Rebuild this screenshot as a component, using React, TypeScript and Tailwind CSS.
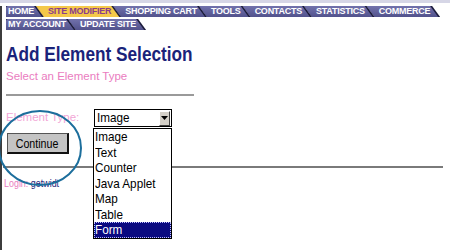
const tabsTop = ['HOME', 'SITE MODIFIER', 'SHOPPING CART', 'TOOLS', 'CONTACTS', 'STATISTICS', 'COMMERCE']
const tabsBottom = ['MY ACCOUNT', 'UPDATE SITE']
const options = ['Image', 'Text', 'Counter', 'Java Applet', 'Map', 'Table', 'Form']

function Tab({ label, first, active }: { label: string; first?: boolean; active?: boolean }) {
  return (
    <div
      className={
        first
          ? 'h-[11px] bg-[#1c1c3c] [clip-path:polygon(0_0,calc(100%_-_8px)_0,100%_100%,0_100%)]'
          : '-ml-[8px] h-[11px] bg-[#1c1c3c] [clip-path:polygon(0_0,calc(100%_-_8px)_0,100%_100%,8px_100%)]'
      }
    >
      <div
        className={`h-[11px] leading-[11px] text-[9px] tracking-[-0.25px] font-bold whitespace-nowrap ${
          first ? 'pl-[2px] rounded-tl-[2px]' : 'pl-[12px]'
        } pr-[10px] ${
          active ? 'bg-[#f4c84a] text-[#8a3d8a]' : 'bg-gradient-to-b from-[#7272ac] to-[#52528c] text-white'
        } [clip-path:polygon(0_0,calc(100%_-_10px)_0,calc(100%_-_2px)_100%,0_100%)]`}
      >
        {label}
      </div>
    </div>
  )
}

export default function App() {
  return (
    <div className="relative w-[450px] h-[250px] overflow-hidden bg-white font-['Liberation_Sans',Arial,sans-serif]">
      <div className="h-[3px] bg-[#d6d6e6]" />
      <div className="h-[247px] mt-[3px] border-l-2 border-[#3c3c3c] pl-[4px]">
        <div className="flex flex-col gap-[2px] mt-[1px]">
          <div className="flex">
            {tabsTop.map((t, i) => (
              <Tab key={t} label={t} first={i === 0} active={t === 'SITE MODIFIER'} />
            ))}
          </div>
          <div className="flex">
            {tabsBottom.map((t, i) => (
              <Tab key={t} label={t} first={i === 0} />
            ))}
          </div>
        </div>

        <h1 className="mt-[12px] text-[21px] leading-[24px] font-bold text-[#1a237a] whitespace-nowrap">
          <span className="inline-block origin-left scale-x-[0.82]">Add Element Selection</span>
        </h1>
        <p className="mt-[3px] text-[11.5px] leading-[14px] text-[#ea7cc0]">Select an Element Type</p>
        <div className="mt-[11px] w-[188px] h-[2px] bg-[#9a9a9a]" />

        <div className="mt-[13px] flex items-center h-[18px]">
          <span className="w-[88px] text-[11.5px] text-[#f2a6d6]">Element Type:</span>
          <div className="relative w-[78px] h-[18px] border border-black bg-white flex items-center">
            <span className="pl-[2px] text-[13px] leading-[16px] text-black flex-1">
              <span className="inline-block origin-left scale-x-[0.9]">Image</span>
            </span>
            <div className="w-[11px] h-[15px] mr-[1px] bg-[#d4d0c8] border-t border-l border-white border-r border-b border-r-[#404040] border-b-[#404040] flex items-center justify-center">
              <svg width="7" height="4" viewBox="0 0 7 4">
                <path d="M0 0h7L3.5 4z" fill="#000" />
              </svg>
            </div>
            <div className="absolute left-[-2px] top-[18px] w-[79px] border border-black bg-white z-10">
              {options.map(o => (
                <div
                  key={o}
                  className={`h-[15.5px] leading-[15.5px] text-[13px] pl-[1px] whitespace-nowrap ${
                    o === 'Form'
                      ? 'bg-[#0a0a80] text-white outline-1 outline-dotted outline-[#c0c0ff] -outline-offset-1'
                      : 'text-black'
                  }`}
                >
                  <span className="inline-block origin-left scale-x-[0.9]">{o}</span>
                </div>
              ))}
            </div>
          </div>
        </div>

        <button className="mt-[6px] ml-[1px] w-[62px] h-[21px] bg-[#c4c4c4] border border-[#555] border-r-2 border-b-2 border-r-[#111] border-b-[#111] text-[13px] leading-[17px] text-black">
          <span className="inline-block scale-x-[0.82]">Continue</span>
        </button>

        <div className="mt-[11px] -ml-[3px] w-[440px] h-[2px] bg-[#7a7a7a]" />

        <p className="mt-[9px] -ml-[2px] text-[10.5px] leading-[12px] whitespace-nowrap">
          <span className="inline-block origin-left scale-x-[0.85]">
            <span className="text-[#ea7cc0]">Login:</span> <span className="text-[#1a237a]">getwidt</span>
          </span>
        </p>
      </div>

      <svg className="absolute left-[-3px] top-[109px]" width="86" height="78" viewBox="0 0 86 78">
        <ellipse cx="43" cy="39" rx="41" ry="37" fill="none" stroke="#1c6e9c" strokeWidth="2" />
      </svg>
    </div>
  )
}
